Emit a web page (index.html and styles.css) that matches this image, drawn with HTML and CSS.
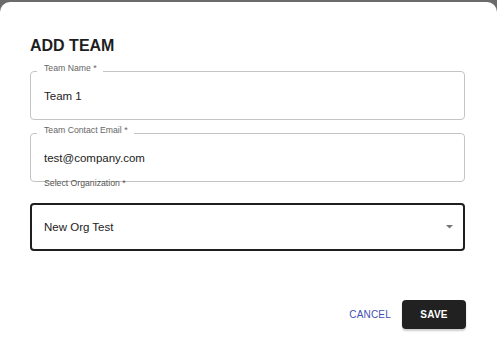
FILE: index.html
```html
<!DOCTYPE html>
<html>
<head>
<meta charset="utf-8">
<link rel="stylesheet" href="styles.css">
</head>
<body>
<div class="dialog">
  <h2 class="title">ADD TEAM</h2>
  <div class="form">
    <div class="field">
      <span class="label notch">Team Name *</span>
      <span class="value">Team 1</span>
    </div>
    <div class="field field-email">
      <span class="label notch">Team Contact Email *</span>
      <span class="value">test@company.com</span>
    </div>
    <div class="field select">
      <span class="label plain">Select Organization *</span>
      <span class="value">New Org Test</span>
      <svg class="arrow" width="7" height="4" viewBox="0 0 7 4"><polygon points="0,0 7,0 3.5,3.5" fill="#757575"/></svg>
    </div>
  </div>
  <div class="actions">
    <button class="btn cancel">CANCEL</button>
    <button class="btn save">SAVE</button>
  </div>
</div>
</body>
</html>
```

FILE: styles.css
```css
html, body {
  margin: 0;
  padding: 0;
}
body {
  background: #6b6b6b;
  font-family: "Liberation Sans", Arial, sans-serif;
  overflow: hidden;
}
.dialog {
  margin-top: 2px;
  min-height: calc(100vh - 2px);
  box-sizing: border-box;
  background: #fff;
  border-radius: 10px 10px 0 0;
  padding: 34px 32px 0 30px;
}
.title {
  margin: 0;
  font-size: 16px;
  line-height: 20px;
  font-weight: bold;
  color: #1e1e1e;
}
.form {
  margin-top: 15px;
  display: flex;
  flex-direction: column;
}
.field {
  position: relative;
  box-sizing: border-box;
  height: 49px;
  border: 1px solid #c4c4c4;
  border-radius: 4px;
  padding: 0 13px;
  display: flex;
  align-items: center;
}
.field-email {
  margin-top: 13px;
}
.value {
  font-size: 11.5px;
  line-height: 14px;
  color: #222;
}
.label {
  position: absolute;
  font-size: 8.7px;
  line-height: 11px;
  color: #666;
  white-space: nowrap;
}
.notch {
  top: -9px;
  left: 6px;
  padding: 0 6px 0 7px;
  background: #fff;
}
.select {
  margin-top: 21px;
  height: 48px;
  border: 2px solid #1f1f1f;
  padding: 0 10px 0 12px;
}
.plain {
  top: -27px;
  left: 12px;
  color: #555;
}
.arrow {
  margin-left: auto;
  display: block;
}
.actions {
  margin-top: 49px;
  display: flex;
  justify-content: flex-end;
  align-items: center;
  margin-right: -1px;
}
.btn {
  font-family: "Liberation Sans", Arial, sans-serif;
  font-size: 10px;
  line-height: 13px;
  border: none;
  cursor: pointer;
  letter-spacing: 0.2px;
}
.cancel {
  background: transparent;
  color: #3f51b5;
  padding: 0 6px;
  margin-right: 5px;
}
.save {
  background: #212121;
  color: #fff;
  font-weight: bold;
  height: 29px;
  min-width: 64px;
  border-radius: 4px;
  padding: 0 16px;
  box-shadow: 0 2px 2px rgba(0,0,0,0.2);
}
```
